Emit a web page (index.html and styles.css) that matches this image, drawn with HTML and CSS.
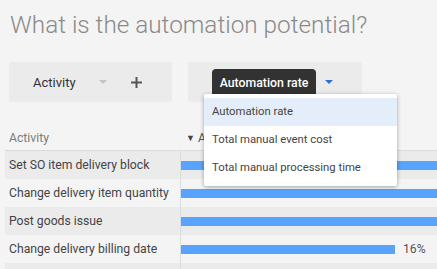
FILE: index.html
```html
<!DOCTYPE html>
<html>
<head>
<meta charset="utf-8">
<link rel="stylesheet" href="styles.css">
</head>
<body>
<h1 class="title">What is the automation potential?</h1>
<div class="controls">
  <div class="box box-dim">
    <span class="dim-label">Activity</span>
    <span class="caret caret-grey"></span>
    <svg class="plus" width="11" height="11" viewBox="0 0 11 11"><path d="M5.5 0V11M0 5.5H11" stroke="#555" stroke-width="2"/></svg>
  </div>
  <div class="box box-kpi">
    <span class="kpi-label">Automation rate</span>
    <span class="caret caret-blue"></span>
  </div>
</div>
<div class="table">
  <div class="thead">
    <div class="th th-name">Activity</div>
    <div class="th th-val"><span class="sort">&#9660;</span> Automation rate</div>
  </div>
  <div class="row odd">
    <div class="cell-name">Set SO item delivery block</div>
    <div class="cell-val"><div class="bar" style="width:100%"></div></div>
  </div>
  <div class="row">
    <div class="cell-name">Change delivery item quantity</div>
    <div class="cell-val"><div class="bar" style="width:100%"></div></div>
  </div>
  <div class="row odd">
    <div class="cell-name">Post goods issue</div>
    <div class="cell-val"><div class="bar" style="width:100%"></div></div>
  </div>
  <div class="row">
    <div class="cell-name">Change delivery billing date</div>
    <div class="cell-val"><div class="bar" style="width:214px"></div><span class="pct">16%</span></div>
  </div>
  <div class="row odd">
    <div class="cell-name"></div>
    <div class="cell-val"></div>
  </div>
</div>
<div class="tooltip">Automation rate</div>
<div class="menu">
  <div class="item active">Automation rate</div>
  <div class="item">Total manual event cost</div>
  <div class="item">Total manual processing time</div>
</div>
</body>
</html>
```
FILE: styles.css
```css
html, body {
  margin: 0;
  padding: 0;
  background: #f4f4f4;
  font-family: Roboto, "Liberation Sans", sans-serif;
  overflow: hidden;
  height: 269px;
}
.title {
  margin: 10px 0 0 10px;
  font-size: 24.3px;
  line-height: 29px;
  font-weight: 300;
  color: #8a8a8a;
  white-space: nowrap;
}
.controls {
  display: flex;
  margin: 23px 0 0 9px;
  gap: 16px;
}
.box {
  height: 40px;
  background: #ebebeb;
  border-radius: 2px;
  display: flex;
  align-items: center;
}
.box-dim {
  width: 163px;
  padding-left: 24px;
  box-sizing: border-box;
}
.dim-label {
  font-size: 13px;
  color: #333;
  width: 66px;
}
.caret {
  width: 0;
  height: 0;
  border-left: 4px solid transparent;
  border-right: 4px solid transparent;
}
.caret-grey {
  border-top: 4px solid #c4c4c4;
}
.plus {
  margin-left: 24px;
}
.box-kpi {
  width: 174px;
  padding-left: 33px;
  box-sizing: border-box;
}
.kpi-label {
  font-size: 12px;
  color: #333;
  width: 104px;
}
.caret-blue {
  border-top: 4px solid #2f6fdc;
}
.table {
  margin: 24px 0 0 5px;
  font-size: 12.2px;
}
.thead {
  display: flex;
  height: 24px;
  line-height: 24px;
  border-bottom: 1px solid #dcdcdc;
  color: #7b7b7b;
}
.th-name {
  width: 176px;
  padding-left: 4px;
  box-sizing: border-box;
}
.th-val {
  padding-left: 5px;
  color: #555;
}
.sort {
  font-size: 9px;
  vertical-align: 1px;
  color: #444;
}
.row {
  display: flex;
  height: 28px;
  align-items: stretch;
}
.row.odd {
  background: #ebebeb;
}
.cell-name {
  width: 176px;
  padding-left: 4px;
  box-sizing: border-box;
  line-height: 28px;
  color: #444;
  white-space: nowrap;
  border-right: 1px solid #dcdcdc;
}
.cell-val {
  flex: 1;
  display: flex;
  align-items: center;
}
.bar {
  height: 9px;
  background: #57a3fe;
}
.pct {
  margin-left: 8px;
  color: #555;
}
.tooltip {
  position: absolute;
  left: 212px;
  top: 69px;
  width: 104px;
  height: 29px;
  line-height: 29px;
  background: #323232;
  border-radius: 4px;
  color: #fff;
  font-size: 12.3px;
  font-weight: 500;
  text-align: center;
}
.menu {
  position: absolute;
  left: 204px;
  top: 94px;
  width: 193px;
  padding: 4px 0;
  background: #fff;
  border-radius: 2px;
  box-shadow: 0 1px 4px rgba(0,0,0,0.35);
}
.item {
  height: 28px;
  line-height: 28px;
  padding-left: 8px;
  font-size: 11.3px;
  color: #444;
}
.item.active {
  background: #e4eefa;
}
```
